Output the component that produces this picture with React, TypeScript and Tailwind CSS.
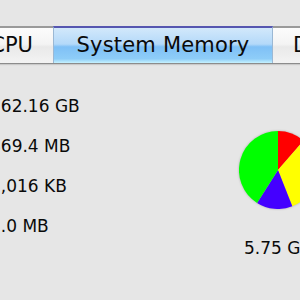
export default function App() {
  const rows = ['162.16 GB', '869.4 MB', '2,016 KB', '1.0 MB']

  return (
    <div
      className="w-[300px] h-[300px] overflow-hidden bg-[#e6e6e6] text-[#0a0a0a] pt-[26px]"
      style={{ fontFamily: '"DejaVu Sans", sans-serif' }}
    >
      {/* tab strip */}
      <div className="flex h-[38px] border-b border-[#8c8c8c] shadow-[0_1px_1px_rgba(0,0,0,0.12)] overflow-hidden">
        <div className="w-[53px] shrink-0 flex justify-end items-center pr-[20px] border-t-2 border-[#9a9a9a] bg-[linear-gradient(#fcfcfc,#f4f4f4_46%,#e9e9e9_54%,#f3f3f3)] text-[21px] whitespace-nowrap">
          CPU
        </div>
        <div className="w-[220px] shrink-0 flex justify-center items-center border-t-2 border-t-[#5656b0] border-x border-x-[#9bb8d4] bg-[linear-gradient(#d2e8fb,#b4d9f9_46%,#7fc0f6_54%,#8ecdf8_88%,#c6f2ff)] text-[21px] tracking-[0.2px] whitespace-nowrap">
          System Memory
        </div>
        <div className="flex-1 flex items-center pl-[20px] border-t-2 border-[#9a9a9a] bg-[linear-gradient(#fcfcfc,#f4f4f4_46%,#e9e9e9_54%,#f3f3f3)] text-[21px] whitespace-nowrap">
          Disk
        </div>
      </div>

      {/* content */}
      <div className="flex">
        <div className="flex-1 -ml-[10px] pt-[22px] text-[17px]">
          {rows.map((r) => (
            <div key={r} className="h-[40px] leading-[40px] whitespace-nowrap">
              {r}
            </div>
          ))}
        </div>
        <div className="w-[78px] shrink-0 -mr-[17px] flex flex-col items-center">
          <svg width="78" height="78" viewBox="0 0 78 78" className="mt-[67px] drop-shadow-[0_0_1px_rgba(0,0,0,0.25)]">
            <path d="M39 39 L39 0 A39 39 0 0 1 64.6 9.6 Z" fill="#ff0000" />
            <path d="M39 39 L64.6 9.6 A39 39 0 0 1 53.3 75.3 Z" fill="#ffff00" />
            <path d="M39 39 L53.3 75.3 A39 39 0 0 1 18.05 71.9 Z" fill="#4400ff" />
            <path d="M39 39 L18.05 71.9 A39 39 0 0 1 39 0 Z" fill="#00ff00" />
          </svg>
          <div className="w-full flex justify-center mt-[29px] text-[17px] leading-[20px] whitespace-nowrap">
            5.75 GB
          </div>
        </div>
      </div>
    </div>
  )
}
